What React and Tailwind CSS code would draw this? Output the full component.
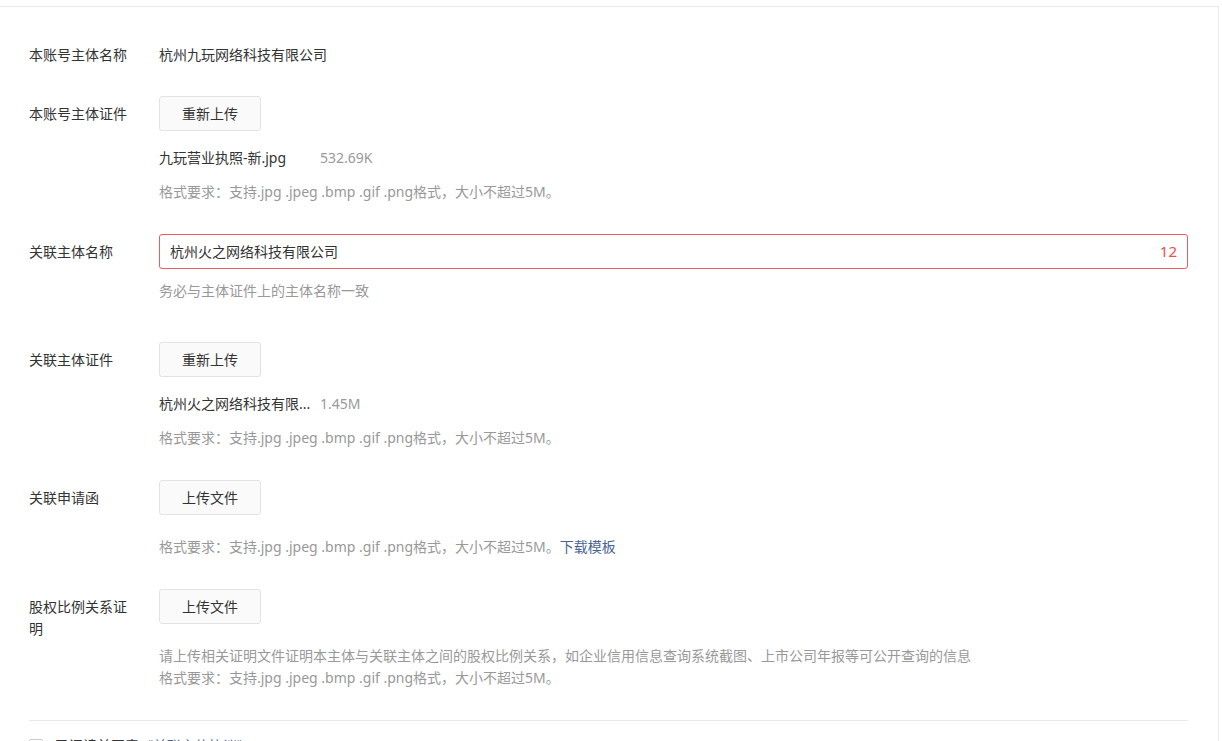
import React from 'react'

const FONT = { fontFamily: '"Noto Sans", "Noto Sans CJK SC", sans-serif' }
const HINT = '格式要求：支持.jpg .jpeg .bmp .gif .png格式，大小不超过5M。'

function Label({ children, pad = true }) {
  return (
    <div className={`w-[100px] shrink-0 mr-[30px] leading-[22px] text-[#333] ${pad ? 'pt-[6.5px]' : ''}`}>
      {children}
    </div>
  )
}

function UploadBtn({ children }) {
  return (
    <button className="w-[102px] h-[35px] rounded-[3px] border border-[#e3e3e3] bg-[#fafafa] text-[14px] text-[#333]">
      {children}
    </button>
  )
}

function FileLine({ name, size }) {
  return (
    <div className="flex items-center leading-[22px] mt-[16px]">
      <span className="w-[152px] whitespace-nowrap overflow-hidden text-[#333]">{name}</span>
      <span className="ml-[9px] text-[#999]">{size}</span>
    </div>
  )
}

function Hint({ children, className = '' }) {
  return <div className={`leading-[22px] text-[#999] ${className}`}>{children}</div>
}

export default function App() {
  return (
    <div className="min-h-screen bg-white pt-[6px] text-[14px]" style={FONT}>
      <div className="w-[1219px] border-t border-r border-[#e8e8e8] bg-white pl-[29px] pr-[30px] pt-[37px]">
        {/* 本账号主体名称 */}
        <div className="flex mb-[30px]">
          <Label pad={false}>本账号主体名称</Label>
          <div className="leading-[22px] text-[#333]">杭州九玩网络科技有限公司</div>
        </div>

        {/* 本账号主体证件 */}
        <div className="flex mb-[31px]">
          <Label>本账号主体证件</Label>
          <div>
            <UploadBtn>重新上传</UploadBtn>
            <FileLine name="九玩营业执照-新.jpg" size="532.69K" />
            <Hint className="mt-[12px]">{HINT}</Hint>
          </div>
        </div>

        {/* 关联主体名称 */}
        <div className="flex mb-[40px]">
          <Label>关联主体名称</Label>
          <div className="flex-1">
            <div className="h-[35px] flex items-center rounded-[3px] border border-[#f25a5e] px-[10px]">
              <span className="flex-1 text-[#333]">杭州火之网络科技有限公司</span>
              <span className="text-[15px] text-[#f04b4f]">12</span>
            </div>
            <Hint className="mt-[11px]">务必与主体证件上的主体名称一致</Hint>
          </div>
        </div>

        {/* 关联主体证件 */}
        <div className="flex mb-[31px]">
          <Label>关联主体证件</Label>
          <div>
            <UploadBtn>重新上传</UploadBtn>
            <FileLine name="杭州火之网络科技有限..." size="1.45M" />
            <Hint className="mt-[12px]">{HINT}</Hint>
          </div>
        </div>

        {/* 关联申请函 */}
        <div className="flex mb-[31px]">
          <Label>关联申请函</Label>
          <div>
            <UploadBtn>上传文件</UploadBtn>
            <Hint className="mt-[21px]">
              {HINT}
              <a className="text-[#4a6494] cursor-pointer">下载模板</a>
            </Hint>
          </div>
        </div>

        {/* 股权比例关系证明 */}
        <div className="flex mb-[31px]">
          <Label>股权比例关系证明</Label>
          <div>
            <UploadBtn>上传文件</UploadBtn>
            <Hint className="mt-[21px]">
              请上传相关证明文件证明本主体与关联主体之间的股权比例关系，如企业信用信息查询系统截图、上市公司年报等可公开查询的信息
            </Hint>
            <Hint>{HINT}</Hint>
          </div>
        </div>

        <div className="border-t border-[#e8e8e8] pt-[14px] pb-[20px] flex items-center">
          <span className="w-[14px] h-[14px] border border-[#ccc] bg-white rounded-[2px]" />
          <span className="ml-[12px] leading-[22px] text-[#333]">
            已阅读并同意<a className="text-[#4a6494]">《关联主体协议》</a>
          </span>
        </div>
      </div>
    </div>
  )
}
